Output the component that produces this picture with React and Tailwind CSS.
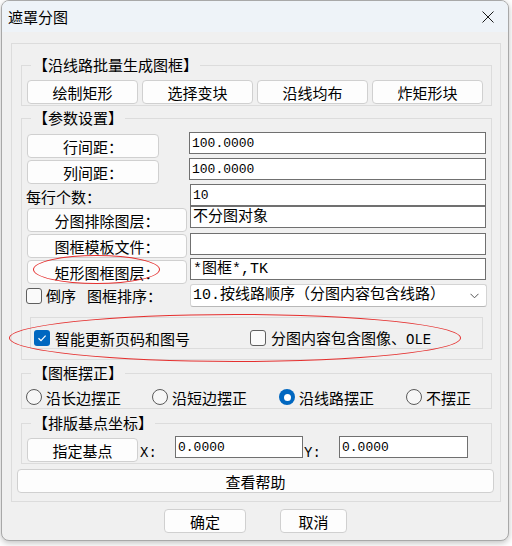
import React from 'react';

const cjk = "font-['Noto_Sans_CJK_SC',sans-serif]";
const mono = "font-['Liberation_Mono','Noto_Sans_CJK_SC',monospace]";

function Btn({ className = '', children }) {
  return (
    <div className={`flex items-center justify-center h-[24px] rounded-[4px] border border-[#d0d0d0] bg-[#fdfdfd] text-[15px] leading-none text-black ${className}`}>
      {children}
    </div>
  );
}

function Field({ className = '', children }) {
  return (
    <div className={`flex items-center h-[22px] border border-[#707070] bg-white pl-[2px] leading-none text-black whitespace-nowrap overflow-hidden ${mono} ${className}`}>
      {children}
    </div>
  );
}

function Group({ title, className = '', children }) {
  return (
    <div className={`relative ml-[9px] w-[471px] border border-[#dcdcdc] ${className}`}>
      <span className="absolute left-[9px] top-[-11px] px-[2px] bg-[#f0f0f0] text-[15px] leading-[20px] text-black">{title}</span>
      {children}
    </div>
  );
}

function Check({ checked }) {
  if (checked) {
    return (
      <span className="flex items-center justify-center w-[16px] h-[16px] rounded-[3px] bg-[#0067c0]">
        <svg width="12" height="12" viewBox="0 0 12 12">
          <path d="M2.5 6.2 5 8.6 9.6 3.6" fill="none" stroke="white" strokeWidth="1.2" />
        </svg>
      </span>
    );
  }
  return <span className="block w-[16px] h-[16px] rounded-[3px] border border-[#5f5f5f] bg-[#fafafa]" />;
}

function Radio({ checked, label, className = '' }) {
  return (
    <div className={`flex items-center gap-[4px] ${className}`}>
      {checked ? (
        <span className="flex items-center justify-center w-[16px] h-[16px] rounded-full bg-[#0067c0]">
          <span className="block w-[7px] h-[7px] rounded-full bg-white" />
        </span>
      ) : (
        <span className="block w-[16px] h-[16px] rounded-full border border-[#5a5a5a] bg-[#f7f7f7]" />
      )}
      <span className="text-[15px] leading-none">{label}</span>
    </div>
  );
}

export default function App() {
  return (
    <div className={`w-[512px] h-[546px] bg-white pl-[1px] ${cjk}`}>
      <div className="relative w-[508px] h-[541px] rounded-[8px] border border-[#a8a8a8] bg-[#f0f0f0] overflow-hidden shadow-[0_2px_6px_rgba(0,0,0,0.25)]">
        {/* title bar */}
        <div className="flex items-center justify-between h-[31px] bg-[#eef3f8] pl-[6px] pr-[14px]">
          <span className="text-[15px] leading-none text-black">遮罩分图</span>
          <svg width="12" height="12" viewBox="0 0 12 12">
            <path d="M0.5 0.5 11.5 11.5 M11.5 0.5 0.5 11.5" stroke="#1a1a1a" strokeWidth="1" />
          </svg>
        </div>

        {/* body */}
        <div className="pl-[9px] pt-[11px]">
          <div className="w-[490px] border border-[#dcdcdc] pb-[8px]">
            <Group title="【沿线路批量生成图框】" className="mt-[21px] h-[41px] pt-[14px] pl-[5px]">
              <div className="flex gap-[4px]">
                <Btn className="w-[111px]">绘制矩形</Btn>
                <Btn className="w-[111px]">选择变块</Btn>
                <Btn className="w-[111px]">沿线均布</Btn>
                <Btn className="w-[111px]">炸矩形块</Btn>
              </div>
            </Group>

            <Group title="【参数设置】" className="mt-[12px] h-[242px] pt-[13px] pl-[5px]">
              <div className="flex items-start h-[26px]">
                <div className="w-[162px]"><Btn className="mt-[2px] w-[132px]">行间距：</Btn></div>
                <Field className="w-[297px] text-[13px]">100.0000</Field>
              </div>
              <div className="flex items-start h-[26px]">
                <div className="w-[162px]"><Btn className="mt-[2px] w-[132px]">列间距：</Btn></div>
                <Field className="w-[297px] text-[13px]">100.0000</Field>
              </div>
              <div className="flex items-start h-[22px]">
                <div className="w-[163px] -ml-[1px] pl-0 h-[22px] flex items-center pt-[2px] text-[15px] leading-none">每行个数：</div>
                <Field className="ml-[1px] w-[296px] text-[13px]">10</Field>
              </div>
              <div className="flex items-start h-[27px]">
                <div className="w-[163px]"><Btn className="mt-[2px] w-[160px]">分图排除图层：</Btn></div>
                <Field className="w-[296px] text-[15px]">不分图对象</Field>
              </div>
              <div className="flex items-start h-[25px]">
                <div className="w-[163px]"><Btn className="mt-[1px] w-[160px]">图框模板文件：</Btn></div>
                <Field className="w-[296px] text-[15px]"></Field>
              </div>
              <div className="flex items-start h-[26px]">
                <div className="w-[163px]"><Btn className="mt-[2px] w-[160px]">矩形图框图层：</Btn></div>
                <Field className="w-[296px] text-[15px]">*图框*,TK</Field>
              </div>
              <div className="flex items-center h-[23px]">
                <div className="w-[163px] flex items-center -ml-[1px]">
                  <Check />
                  <span className="ml-[4px] text-[15px] leading-none">倒序</span>
                  <span className="ml-[11px] text-[15px] leading-none">图框排序：</span>
                </div>
                <div className={`ml-[1px] w-[297px] h-[23px] flex items-center justify-between rounded-[3px] border border-[#d4d4d4] border-b-[#b8b8b8] bg-white pl-[2px] pr-[7px] text-[15px] leading-none ${mono}`}>
                  <span>10.按线路顺序（分图内容包含线路）</span>
                  <svg width="9" height="6" viewBox="0 0 9 6">
                    <path d="M0.5 0.8 4.5 4.8 8.5 0.8" fill="none" stroke="#555" strokeWidth="1" />
                  </svg>
                </div>
              </div>
              <div className="ml-[3px] mt-[10px] w-[453px] h-[32px] border border-[#dcdcdc] pl-[3px] pt-[12px]">
                <div className="flex items-center h-[16px]">
                  <div className="w-[216px] flex items-center gap-[5px]">
                    <Check checked />
                    <span className="text-[15px] leading-none">智能更新页码和图号</span>
                  </div>
                  <div className="flex items-center gap-[5px]">
                    <Check />
                    <span className="text-[15px] leading-none">分图内容包含图像、<span className={`${mono} text-[14px]`}>OLE</span></span>
                  </div>
                </div>
              </div>
            </Group>

            <Group title="【图框摆正】" className="mt-[13px] h-[36px] pt-[15px] pl-[4px]">
              <div className="flex items-center h-[16px]">
                <Radio className="w-[126px]" label="沿长边摆正" />
                <Radio className="w-[127px]" label="沿短边摆正" />
                <Radio className="w-[127px]" checked label="沿线路摆正" />
                <Radio label="不摆正" />
              </div>
            </Group>

            <Group title="【排版基点坐标】" className="mt-[14px] h-[41px] pt-[12px] pl-[5px]">
              <div className="flex items-start">
                <Btn className="mt-[2px] w-[111px]">指定基点</Btn>
                <span className={`w-[37px] pl-[2px] pt-[10px] text-[14px] leading-none ${mono}`}>X:</span>
                <Field className="w-[128px] text-[13px]">0.0000</Field>
                <span className={`w-[36px] pl-[1px] pt-[10px] text-[14px] leading-none ${mono}`}>Y:</span>
                <Field className="w-[129px] text-[13px]">0.0000</Field>
              </div>
            </Group>

            <Btn className="ml-[5px] mt-[5px] w-[477px]">查看帮助</Btn>
          </div>
        </div>

        {/* footer */}
        <div className="flex mt-[7px] ml-[162px] gap-[34px]">
          <Btn className="w-[82px] border-[#0067c0]">确定</Btn>
          <Btn className="w-[67px]">取消</Btn>
        </div>

        {/* red annotation ellipses */}
        <div className="absolute left-[31px] top-[254px] w-[127px] h-[29px] rounded-[50%] border-[1.5px] border-[#e5302f] pointer-events-none" />
        <div className="absolute left-[7px] top-[313px] w-[452px] h-[48px] rounded-[50%] border-[1.5px] border-[#e5302f] pointer-events-none" />
      </div>
    </div>
  );
}
